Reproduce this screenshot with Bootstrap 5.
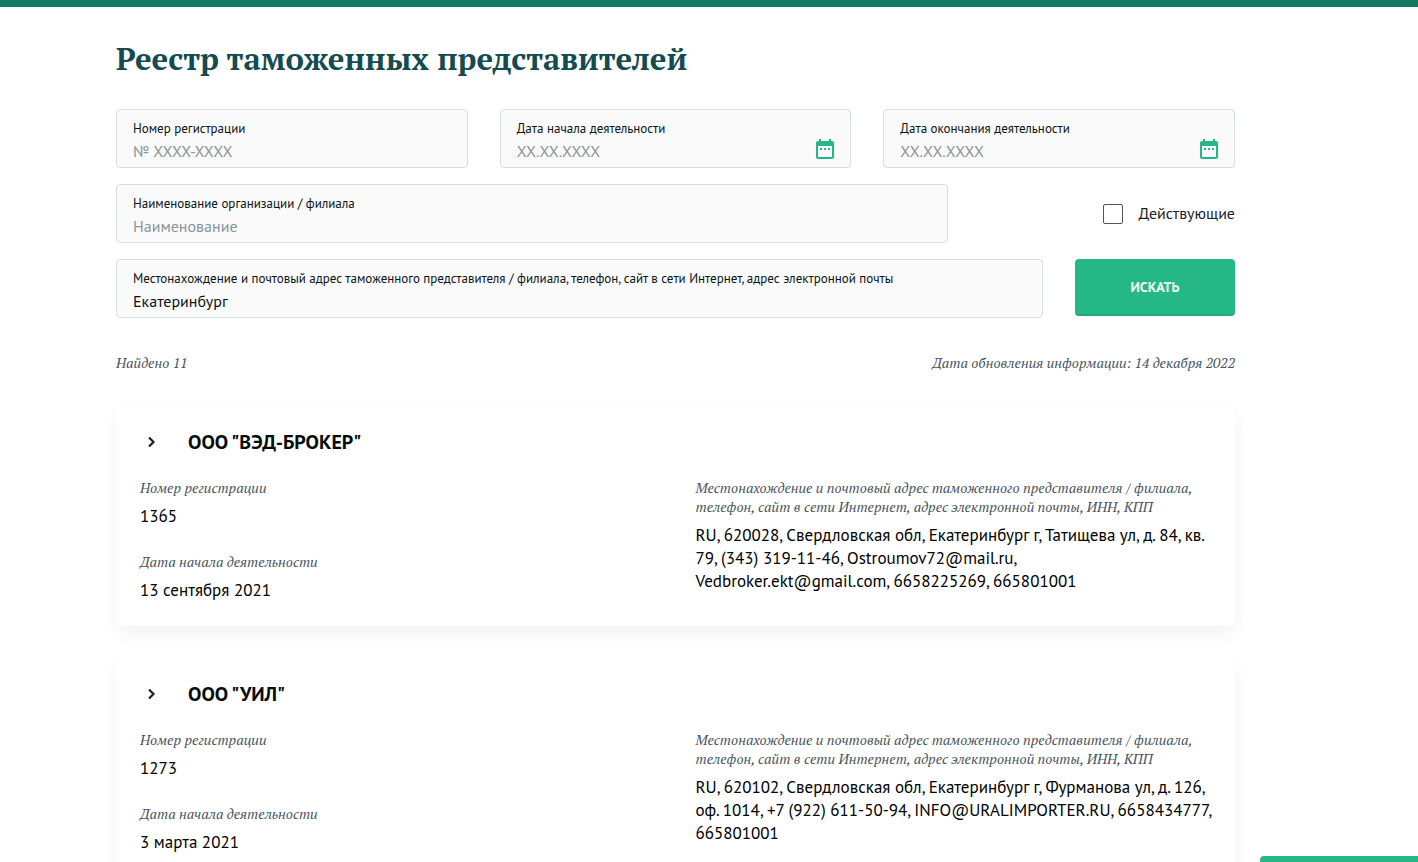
<!DOCTYPE html>
<html lang="ru">
<head>
<meta charset="utf-8">
<meta name="viewport" content="width=device-width, initial-scale=1">
<title>Реестр таможенных представителей</title>
<link href="https://cdn.jsdelivr.net/npm/bootstrap@5.3.0/dist/css/bootstrap.min.css" rel="stylesheet">
<style>
:root{--sans:"PT Sans",Roboto,sans-serif;--serif:"PT Serif","Liberation Serif",serif;--accent:#25b886}
html{scrollbar-width:none}
body{font-family:var(--sans);color:#000;background:#fff}
.topbar{height:7px;background:linear-gradient(90deg,#117a65 90%,#127762)}
.page{padding:30px 183px 32px 116px}
.page-title{font:700 31px/44px var(--serif);color:#134b51;margin-bottom:28px}
.form-grid{row-gap:16px}
.form-line{column-gap:32px}
.field{background:#fafafa;border:1px solid #d9e0df;border-radius:4px;padding:10px 16px 5px;position:relative}
.field label{display:block;font-size:13px;line-height:18px;margin-bottom:2px;color:#0b1414}
.field input{display:block;width:100%;border:0;background:none;padding:0;height:22px;font-size:16px;line-height:22px;color:#0b1414;outline:0}
.field input::placeholder{color:#8b9499;opacity:1}
.cal{position:absolute;right:13px;bottom:6px;width:24px;height:24px;border:0;padding:0;background:none;color:var(--accent)}
.cal svg,.toggle svg{display:block}
.name-field{flex:0 1 832px}
.active-only{font-size:16px;line-height:22px;color:#1c2328;gap:16px}
.active-only span{padding-bottom:2px}
.active-only input{appearance:none;width:20px;height:20px;border:1px solid #555;border-radius:2px;background:#fff;margin:0}
.btn-search{width:160px;height:57px;border:0;border-bottom:2px solid #22a87a;border-radius:4px;background:var(--accent);color:#f2fbf7;font-size:14px;font-weight:700;padding:2px 0 0}
.summary{font:italic 14px/24px var(--serif);color:#4b555b;margin:33px 0 31px}
.entry{background:#fff;border-radius:8px;box-shadow:0 8px 20px rgba(0,0,0,.05);padding:24px;margin-bottom:32px}
.entry-head{gap:24px;margin-bottom:24px}
.entry-head h2{font-size:20px;line-height:24px;font-weight:700;margin:0;color:#060b0b}
.toggle{width:24px;height:24px;border:0;padding:0;background:none;color:#1b2226}
.entry-grid{display:grid;grid-template-columns:1fr 1fr;column-gap:40px}
.entry dl{margin:0}
.entry dt{font:italic 14px/19px var(--serif);color:#4b555b;margin-bottom:8px}
.entry dd{font-size:17px;line-height:23px;margin:0}
.entry dd+dt{margin-top:24px}
.helper{right:0;bottom:0;width:158px;height:6px;padding:0;border:0;border-radius:4px 0 0 0;background:var(--accent)}
</style>
</head>
<body>
<div class="topbar"></div>
<main class="page">
  <h1 class="page-title">Реестр таможенных представителей</h1>
  <form class="form-grid d-flex flex-column">
    <div class="form-line d-flex">
      <div class="field flex-fill w-100"><label for="num">Номер регистрации</label><input id="num" type="text" placeholder="№ XXXX-XXXX"></div>
      <div class="field flex-fill w-100"><label for="from">Дата начала деятельности</label><input id="from" type="text" placeholder="XX.XX.XXXX">
        <button class="cal" type="button" aria-label="Календарь"><svg width="24" height="24" viewBox="0 0 24 24" fill="currentColor"><path d="M7 11h2v2H7zm4 0h2v2h-2zm4 0h2v2h-2z"/><path fill-rule="evenodd" d="M6 2h2v2h8V2h2v2h1a2 2 0 0 1 2 2v14a2 2 0 0 1-2 2H5a2 2 0 0 1-2-2V6a2 2 0 0 1 2-2h1zM5 9v11h14V9z"/></svg></button></div>
      <div class="field flex-fill w-100"><label for="to">Дата окончания деятельности</label><input id="to" type="text" placeholder="XX.XX.XXXX">
        <button class="cal" type="button" aria-label="Календарь"><svg width="24" height="24" viewBox="0 0 24 24" fill="currentColor"><path d="M7 11h2v2H7zm4 0h2v2h-2zm4 0h2v2h-2z"/><path fill-rule="evenodd" d="M6 2h2v2h8V2h2v2h1a2 2 0 0 1 2 2v14a2 2 0 0 1-2 2H5a2 2 0 0 1-2-2V6a2 2 0 0 1 2-2h1zM5 9v11h14V9z"/></svg></button></div>
    </div>
    <div class="form-line d-flex justify-content-between align-items-center">
      <div class="field name-field"><label for="org">Наименование организации / филиала</label><input id="org" type="text" placeholder="Наименование"></div>
      <label class="active-only d-flex align-items-center"><input type="checkbox"><span>Действующие</span></label>
    </div>
    <div class="form-line d-flex align-items-start">
      <div class="field flex-fill"><label for="addr">Местонахождение и почтовый адрес таможенного представителя / филиала, телефон, сайт в сети Интернет, адрес электронной почты</label><input id="addr" type="text" value="Екатеринбург"></div>
      <button class="btn-search" type="submit">ИСКАТЬ</button>
    </div>
  </form>
  <div class="summary d-flex justify-content-between"><span>Найдено 11</span><span>Дата обновления информации: 14 декабря 2022</span></div>

  <article class="entry">
    <div class="entry-head d-flex"><button class="toggle" type="button" aria-label="Развернуть"><svg width="24" height="24" viewBox="0 0 24 24" fill="none" stroke="currentColor" stroke-width="2.200"><path d="M9 7.500l4.500 4.500L9 16.500"/></svg></button><h2>ООО "ВЭД-БРОКЕР"</h2></div>
    <div class="entry-grid">
      <dl><dt>Номер регистрации</dt><dd>1365</dd><dt>Дата начала деятельности</dt><dd>13 сентября 2021</dd></dl>
      <dl><dt>Местонахождение и почтовый адрес таможенного представителя / филиала, телефон, сайт в сети Интернет, адрес электронной почты, ИНН, КПП</dt><dd>RU, 620028, Свердловская обл, Екатеринбург г, Татищева ул, д. 84, кв. 79, (343) 319-11-46, Ostroumov72@mail.ru, Vedbroker.ekt@gmail.com, 6658225269, 665801001</dd></dl>
    </div>
  </article>
  <article class="entry">
    <div class="entry-head d-flex"><button class="toggle" type="button" aria-label="Развернуть"><svg width="24" height="24" viewBox="0 0 24 24" fill="none" stroke="currentColor" stroke-width="2.200"><path d="M9 7.500l4.500 4.500L9 16.500"/></svg></button><h2>ООО "УИЛ"</h2></div>
    <div class="entry-grid">
      <dl><dt>Номер регистрации</dt><dd>1273</dd><dt>Дата начала деятельности</dt><dd>3 марта 2021</dd></dl>
      <dl><dt>Местонахождение и почтовый адрес таможенного представителя / филиала, телефон, сайт в сети Интернет, адрес электронной почты, ИНН, КПП</dt><dd>RU, 620102, Свердловская обл, Екатеринбург г, Фурманова ул, д. 126, оф. 1014, +7 (922) 611-50-94, INFO@URALIMPORTER.RU, 6658434777, 665801001</dd></dl>
    </div>
  </article>
</main>
<button class="helper position-fixed" type="button" aria-label="Помощь"></button>
<script src="https://cdn.jsdelivr.net/npm/bootstrap@5.3.0/dist/js/bootstrap.bundle.min.js"></script>
</body>
</html>
